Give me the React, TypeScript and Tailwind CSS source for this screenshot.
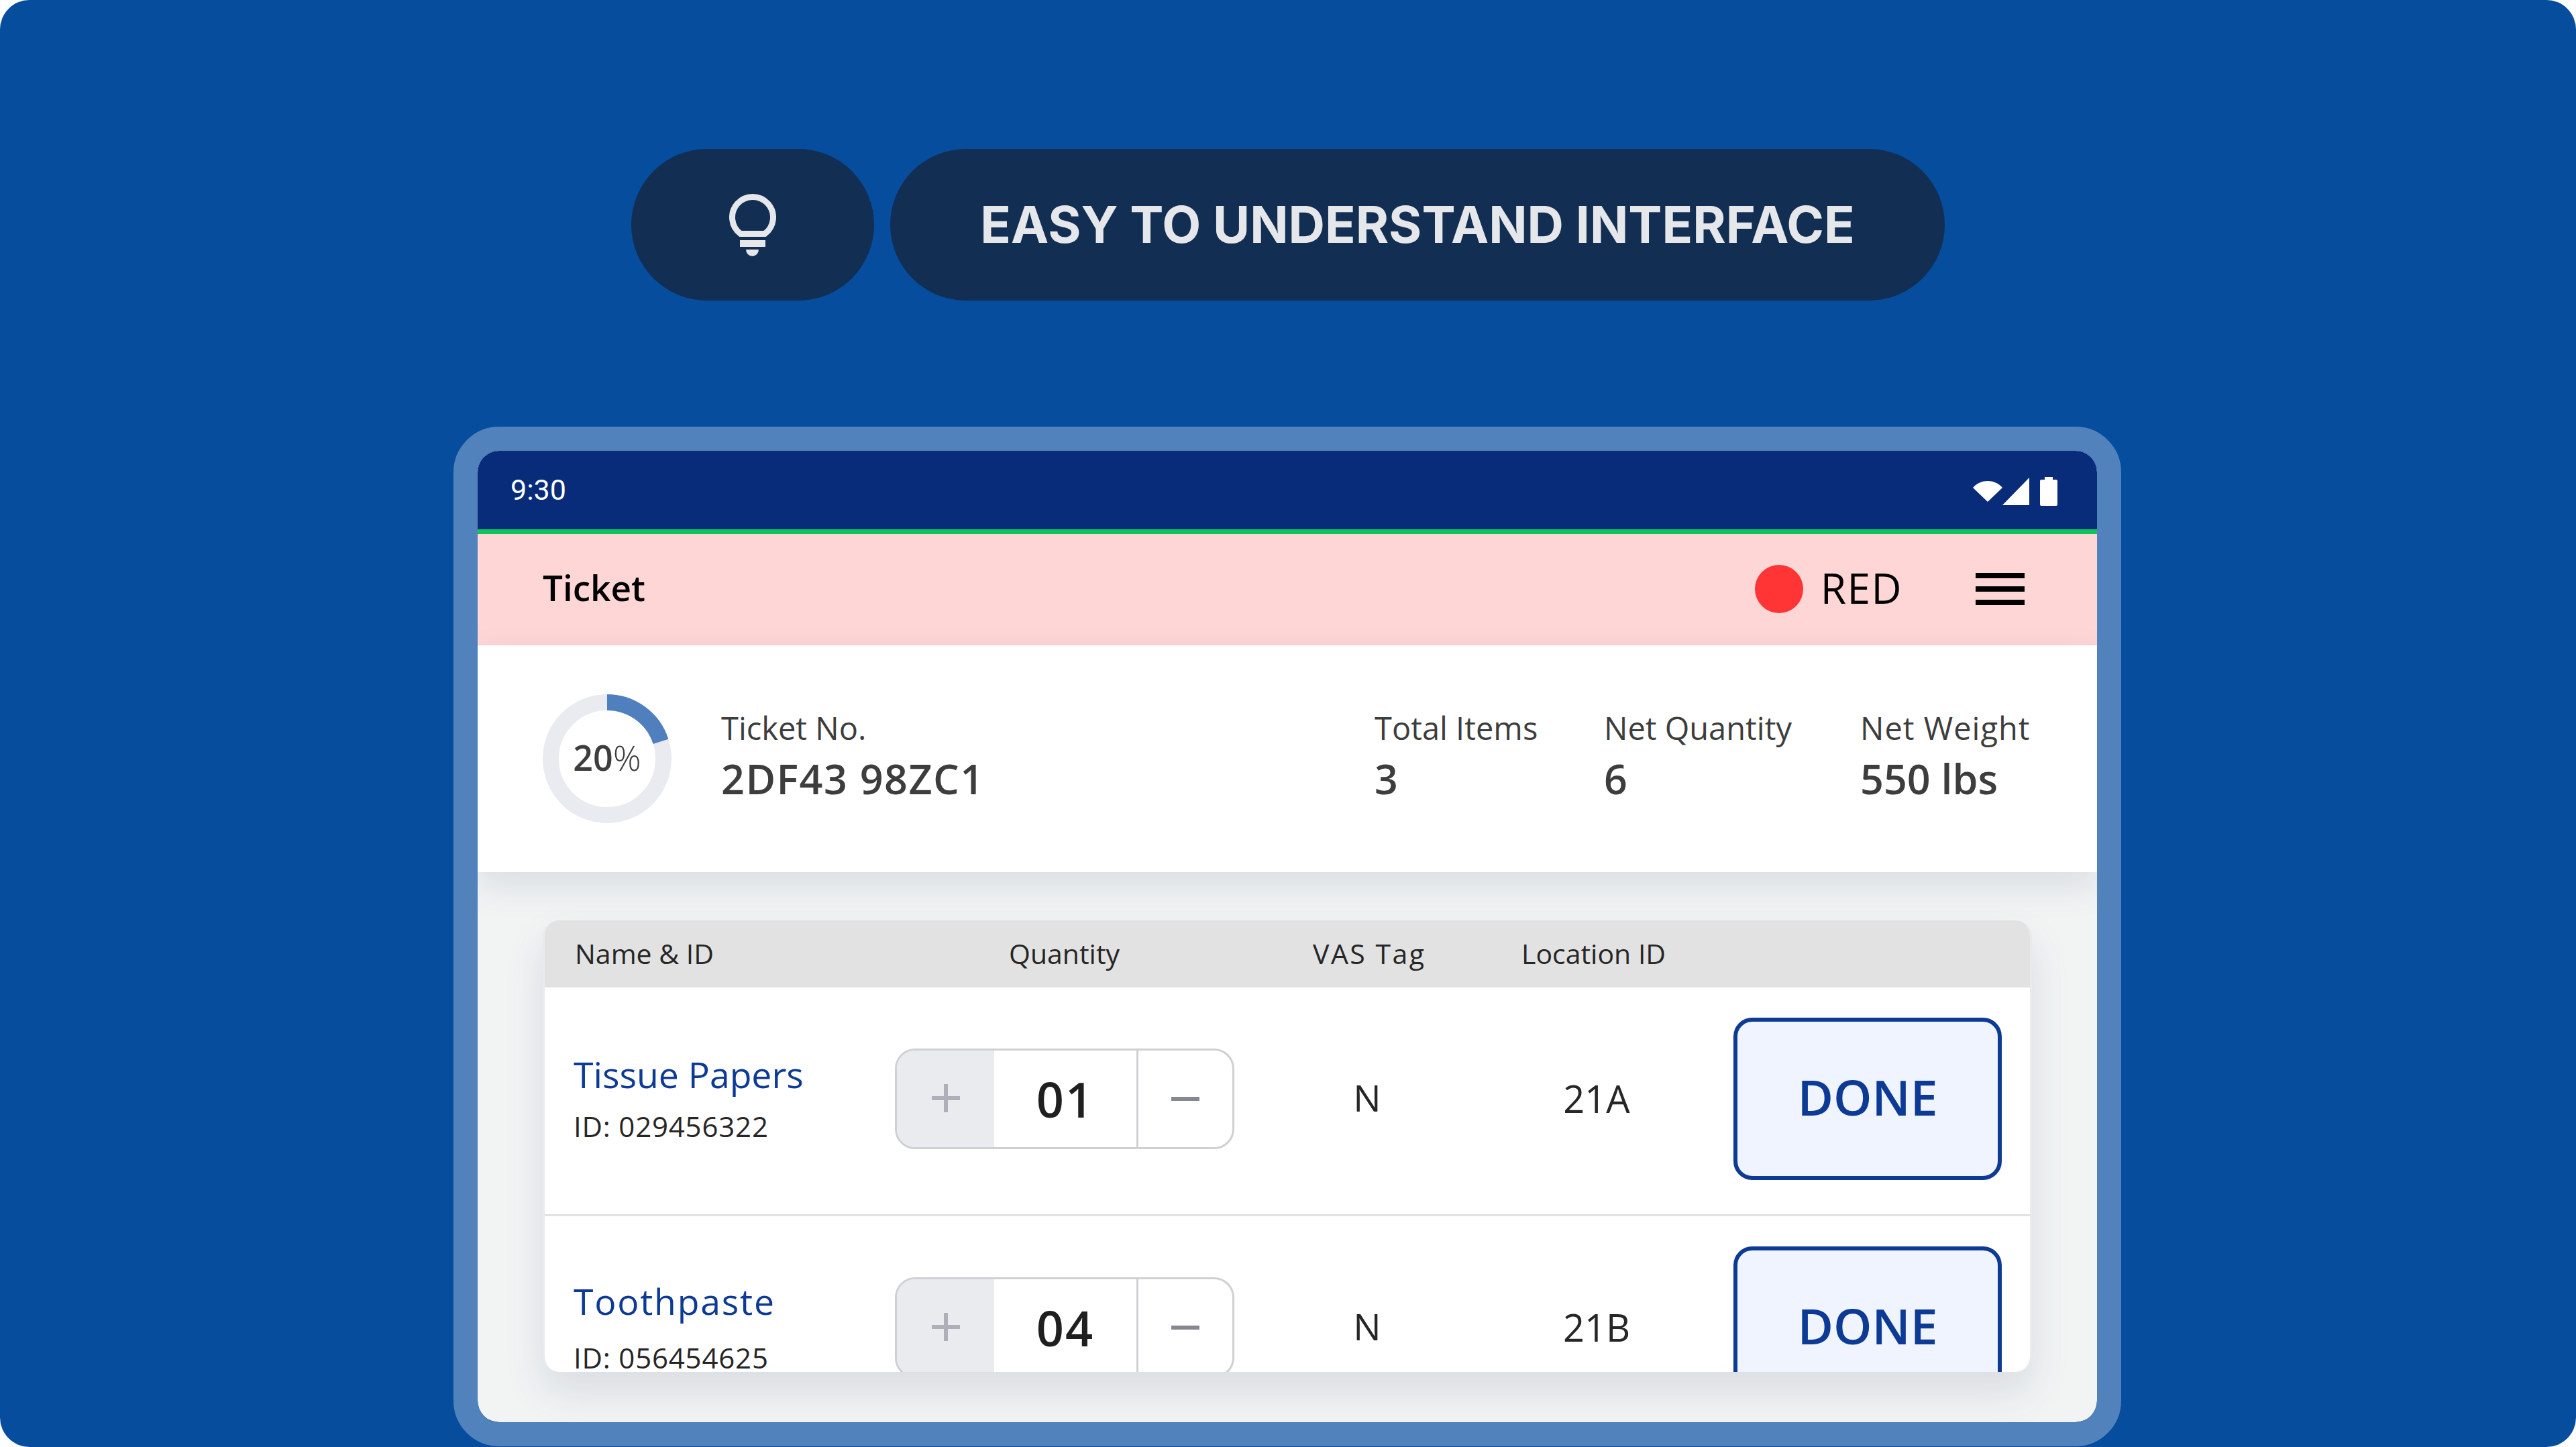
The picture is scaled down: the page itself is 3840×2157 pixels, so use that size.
const items = [
  { name: "Tissue Papers", nameClass: "", idGap: "mt-[28px]", id: "029456322", qty: "01", loc: "21A" },
  { name: "Toothpaste", nameClass: "tracking-[1.8px]", idGap: "mt-[35px]", id: "056454625", qty: "04", loc: "21B" },
];

const stats = [
  { label: "Total Items", value: "3", width: "w-[342px]", labelClass: "" },
  { label: "Net Quantity", value: "6", width: "w-[382px]", labelClass: "" },
  { label: "Net Weight", value: "550 lbs", width: "w-[353px]", labelClass: "tracking-[1px]" },
];

function Bulb() {
  return (
    <svg width="70" height="94" viewBox="0 0 70 94" fill="none">
      <path
        d="M17 60.6A30.5 30.5 0 1 1 53 60.6Z"
        stroke="#e5e7eb"
        strokeWidth="9"
        strokeLinejoin="round"
      />
      <rect x="16" y="70" width="38" height="10" fill="#e5e7eb" />
      <path d="M25 84h19a9.5 10 0 0 1-19 0Z" fill="#e5e7eb" />
    </svg>
  );
}

function StatusIcons() {
  return (
    <svg className="mt-[4px]" width="126" height="43" viewBox="0 0 126 43" fill="white">
      <path d="M0 16C6 9 14 6 22 6s16 3 22 10L22 37Z" />
      <path d="M84 1V42H44Z" />
      <path d="M107 0h12v4h5a2 2 0 0 1 2 2v35a2 2 0 0 1-2 2h-22a2 2 0 0 1-2-2V6a2 2 0 0 1 2-2h5Z" />
    </svg>
  );
}

function ProgressRing() {
  return (
    <div className="relative w-[192px] h-[192px] shrink-0">
      <svg width="192" height="192" viewBox="0 0 192 192" fill="none">
        <circle cx="96" cy="96" r="84" stroke="#e9ebf0" strokeWidth="24" />
        <circle
          cx="96"
          cy="96"
          r="84"
          stroke="#4f80bd"
          strokeWidth="24"
          strokeDasharray="105.6 422.2"
          transform="rotate(-90 96 96)"
        />
      </svg>
      <div className="absolute inset-0 flex items-center justify-center pb-[5px] text-[52px] leading-none text-[#3d3d3d]">
        <span className="font-semibold">20</span>
        <span className="font-light">%</span>
      </div>
    </div>
  );
}

function Stepper({ qty }: { qty: string }) {
  return (
    <div className="flex w-[506px] h-[150px] rounded-[30px] border-[3px] border-[#cfd0d4] overflow-hidden bg-white">
      <div className="w-[145px] flex items-center justify-center bg-[#e9ebee] pb-[3px]">
        <svg width="42" height="42" viewBox="0 0 42 42" fill="#adb0b8">
          <rect x="18" y="0" width="6" height="42" />
          <rect x="0" y="18" width="42" height="6" />
        </svg>
      </div>
      <div className="w-[212px] flex items-center justify-center text-[72px] font-semibold tracking-[2px] text-[#1f1f1f] leading-none">
        {qty}
      </div>
      <div className="flex-1 flex items-center justify-center border-l-[3px] border-[#cfd0d4]">
        <div className="w-[42px] h-[6px] bg-[#85888f]" />
      </div>
    </div>
  );
}

function Row({ item }: { item: (typeof items)[number] }) {
  return (
    <div className="grid grid-cols-[522px_506px_396px_288px_60px_400px] items-center h-[341px] shrink-0 pb-[6px] border-b-[3px] border-[#e2e2e2]">
      <div className="pl-[43px] pb-[10px]">
        <div className={`text-[53.5px] leading-[64px] text-[#0d3a94] ${item.nameClass}`}>{item.name}</div>
        <div className={`${item.idGap} text-[42px] leading-[34px] tracking-[0.8px] text-[#262626]`}>
          ID: {item.id}
        </div>
      </div>
      <Stepper qty={item.qty} />
      <div className="text-center text-[55px] pb-[3px] text-[#262626]">N</div>
      <div className="text-center text-[56px] pb-[3px] text-[#262626]">{item.loc}</div>
      <div />
      <button className="h-[242px] pb-[6px] rounded-[28px] border-[6px] border-[#0d3a94] bg-[#f0f4fe] text-[73px] font-semibold text-[#0d3a94]">
        DONE
      </button>
    </div>
  );
}

export default function App() {
  return (
    <div className="h-[2157px] overflow-hidden bg-white font-['Open_Sans',sans-serif]">
      <div className="h-full rounded-[44px] bg-[#064d9e] pt-[222px] flex flex-col items-center">
        <div className="flex gap-[24px] font-['Inter',sans-serif]">
          <div className="w-[362px] h-[226px] rounded-[113px] bg-[#122e52] flex items-center justify-center">
            <Bulb />
          </div>
          <div className="w-[1572px] h-[226px] rounded-[113px] bg-[#122e52] flex items-center justify-center text-[75.3px] font-bold text-[#e5e7eb]">
            EASY TO UNDERSTAND INTERFACE
          </div>
        </div>

        <div className="mt-[188px] mr-[2px] w-[2486px] h-[1520px] rounded-[68px] border-[36px] border-[#5182bc] overflow-hidden">
          <div className="h-full rounded-[32px] overflow-hidden bg-[#f2f4f4] flex flex-col">
            <div className="h-[124px] shrink-0 bg-[#082c7a] border-b-[7px] border-[#10c45c] flex items-center justify-between pl-[49px] pr-[59px]">
              <span className="font-['Roboto',sans-serif] text-[43px] text-white">9:30</span>
              <StatusIcons />
            </div>

            <div className="h-[166px] shrink-0 bg-[#ffd6d6] flex items-center pl-[97px] pr-[108px] pb-[3px]">
              <span className="text-[53px] pb-[3px] font-semibold text-black">Ticket</span>
              <div className="ml-auto w-[72px] h-[72px] rounded-full bg-[#ff3535]" />
              <span className="ml-[26px] text-[62px] tracking-[1.5px] pb-[3px] text-black">RED</span>
              <div className="ml-[109px] w-[73px] flex flex-col gap-[12px]">
                <div className="h-[8px] bg-black" />
                <div className="h-[8px] bg-black" />
                <div className="h-[8px] bg-black" />
              </div>
            </div>

            <div className="relative z-10 h-[338px] shrink-0 bg-white flex items-center pl-[97px] shadow-[0_20px_50px_rgba(40,60,100,0.12)]">
              <ProgressRing />
              <div className="ml-[74px] flex-1 pb-[11px] text-[#3d3d3d]">
                <div className="text-[47px] leading-[60px] mb-[10px]">Ticket No.</div>
                <div className="text-[61px] leading-[72px] tracking-[1.5px] font-semibold">2DF43 98ZC1</div>
              </div>
              {stats.map((stat) => (
                <div key={stat.label} className={`${stat.width} pb-[11px] text-[#3d3d3d]`}>
                  <div className={`text-[47px] leading-[60px] mb-[10px] ${stat.labelClass}`}>{stat.label}</div>
                  <div className="text-[61px] leading-[72px] font-semibold">{stat.value}</div>
                </div>
              ))}
            </div>

            <div className="mx-[97px] mt-[72px] h-[673px] rounded-[24px] overflow-hidden border-x-[3px] border-[#e8eaed] bg-white shadow-[0_30px_60px_rgba(40,60,100,0.12)] flex flex-col">
              <div className="h-[100px] shrink-0 -mx-[3px] bg-[#e2e2e2] flex items-center text-[41px] text-[#262626]">
                <span className="pl-[48px] w-[695px]">Name &amp; ID</span>
                <span className="w-[453px]">Quantity</span>
                <span className="w-[311px] tracking-[2.5px]">VAS Tag</span>
                <span>Location ID</span>
              </div>
              {items.map((item) => (
                <Row key={item.id} item={item} />
              ))}
            </div>
          </div>
        </div>
      </div>
    </div>
  );
}
